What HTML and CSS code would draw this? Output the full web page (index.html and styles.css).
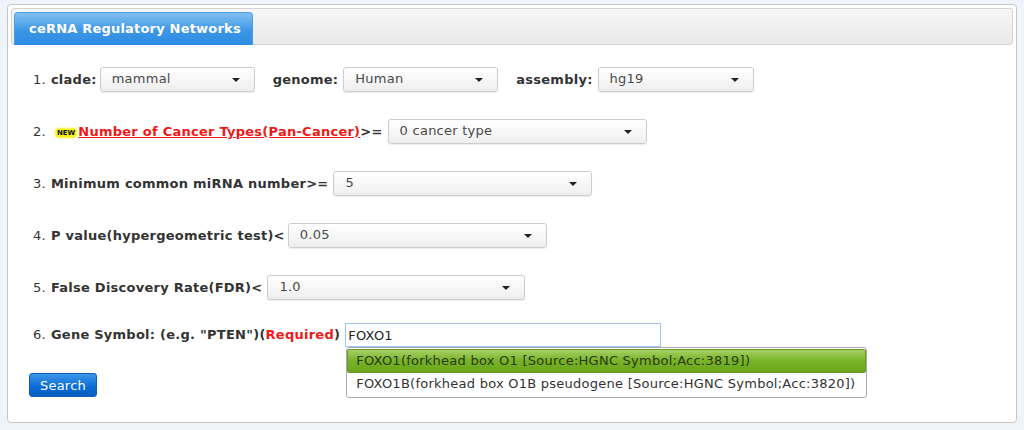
FILE: index.html
```html
<!DOCTYPE html>
<html lang="en">
<head>
  <meta charset="UTF-8" />
  <title>ceRNA Regulatory Networks</title>
  <link rel="stylesheet" href="styles.css">
</head>
<body>
  <div class="panel">
    <div class="tabs">
      <div class="tab active">ceRNA Regulatory Networks</div>
    </div>

    <form class="net-form">
      <div class="row">
        <span class="num">1.</span><label class="first">clade:</label>
        <div class="select w155">mammal</div>
        <label class="sp">genome:</label>
        <div class="select w155">Human</div>
        <label class="sp">assembly:</label>
        <div class="select w156">hg19</div>
      </div>

      <div class="row">
        <span class="num">2.</span>
        <span class="new">NEW</span>
        <a class="pan" href="#">Number of Cancer Types(Pan-Cancer)</a><label>&gt;=</label>
        <div class="select w259">0 cancer type</div>
      </div>

      <div class="row">
        <span class="num">3.</span><label>Minimum common miRNA number&gt;=</label>
        <div class="select w259">5</div>
      </div>

      <div class="row">
        <span class="num">4.</span><label class="tight">P value(hypergeometric test)&lt;</label>
        <div class="select w259">0.05</div>
      </div>

      <div class="row">
        <span class="num">5.</span><label>False Discovery Rate(FDR)&lt;</label>
        <div class="select w258">1.0</div>
      </div>

      <div class="row gene-row">
        <span class="num">6.</span><label>Gene Symbol: (e.g. "PTEN")(<span class="req">Required</span>)</label>
        <div class="gene-box">
          <input type="text" class="gene-input" value="FOXO1" />
          <ul class="suggest">
            <li class="hit">FOXO1(forkhead box O1 [Source:HGNC Symbol;Acc:3819])</li>
            <li>FOXO1B(forkhead box O1B pseudogene [Source:HGNC Symbol;Acc:3820])</li>
          </ul>
        </div>
      </div>

      <button type="button" class="search-btn">Search</button>
    </form>
  </div>
</body>
</html>
```

FILE: styles.css
```css
* {
  margin: 0;
  padding: 0;
  box-sizing: border-box;
}
body {
  background-color: #eef4fa;
  font-family: 'DejaVu Sans', Verdana, sans-serif;
  font-size: 13px;
  letter-spacing: 0.25px;
  color: #333;
  padding: 4px 7px 7px 7px;
}
.panel {
  background-color: #fff;
  border: 1px solid #c5c5c5;
  border-radius: 4px;
  height: 419px;
  padding: 3px;
}
.tabs {
  height: 37px;
  border: 1px solid #d3d3d3;
  border-radius: 3px;
  background: linear-gradient(#f7f7f7, #e9e9e9);
  padding: 3px 0 0 2px;
}
.tab {
  display: inline-block;
  height: 33px;
  width: 239px;
  padding: 8px 0 0 14px;
  color: #fff;
  font-weight: bold;
  font-size: 13px;
  letter-spacing: 0.2px;
  border-radius: 4px 4px 0 0;
  border: 1px solid #4c9fe6;
  border-bottom: none;
  background: linear-gradient(#82c0f1, #3d96e6 55%, #2c8ce3);
}
.net-form {
  padding: 22px 0 0 22px;
}
.row {
  display: flex;
  align-items: center;
  height: 25px;
  margin-bottom: 27px;
  font-weight: bold;
  white-space: nowrap;
}
.num {
  font-weight: normal;
  margin-right: 5px;
}
.row label {
  margin-right: 5px;
}
.row label.first {
  margin-right: 3px;
}
.row label.tight {
  margin-right: 3px;
}
.row label.sp {
  margin-left: 18px;
}
.select {
  position: relative;
  height: 25px;
  border: 1px solid #cdcdcd;
  border-radius: 3px;
  background: linear-gradient(#ffffff, #eeeeee);
  box-shadow: 0 1px 1px rgba(0,0,0,0.08);
  font-weight: normal;
  color: #4a4a4a;
  padding: 3px 0 0 11px;
}
.select::after {
  content: '';
  position: absolute;
  right: 14px;
  top: 10px;
  border-left: 4px solid transparent;
  border-right: 4px solid transparent;
  border-top: 4px solid #222;
}
.w155 { width: 155px; }
.w156 { width: 156px; }
.w258 { width: 258px; }
.w259 { width: 259px; }
.new {
  font-size: 7px;
  font-weight: bold;
  letter-spacing: 0;
  color: #111;
  background-color: #f3f21a;
  border-radius: 3px;
  box-shadow: 0 0 2px 1px #f3f21a;
  padding: 0 1px;
  margin: 2px 2px 0 5px;
}
.pan {
  color: #f01818;
  text-decoration: underline;
}
.req {
  color: #f01818;
}
.gene-row {
  margin-top: -4px;
  margin-bottom: 0;
  height: 23px;
}
.gene-box {
  position: relative;
}
.gene-input {
  width: 316px;
  height: 24px;
  border: 1px solid #a4c6ee;
  font-family: 'DejaVu Sans', Verdana, sans-serif;
  font-size: 13px;
  letter-spacing: 0.25px;
  color: #222;
  padding: 1px 0 0 2px;
  outline: none;
}
.suggest {
  position: absolute;
  left: 1px;
  top: 24px;
  width: 521px;
  list-style: none;
  background-color: #fff;
  border: 1px solid #aaa;
  border-radius: 3px;
  font-weight: normal;
  padding: 1px 0 0 0;
}
.suggest li {
  height: 24px;
  padding: 3px 0 0 9px;
  color: #333;
}
.suggest li.hit {
  background: linear-gradient(#a6d164, #77b227 50%, #6aa51a);
  border: 1px solid #6b9c2a;
  border-radius: 2px;
  padding-left: 8px;
  color: #2a3a10;
}
.search-btn {
  display: block;
  margin: 27px 0 0 -4px;
  width: 68px;
  height: 24px;
  border: 1px solid #0b5bb8;
  border-radius: 3px;
  background: linear-gradient(#3c97ea, #0a6bd4 60%, #0a5ec0);
  color: #fff;
  font-family: 'DejaVu Sans', Verdana, sans-serif;
  font-size: 13px;
  letter-spacing: 0.25px;
}
```
